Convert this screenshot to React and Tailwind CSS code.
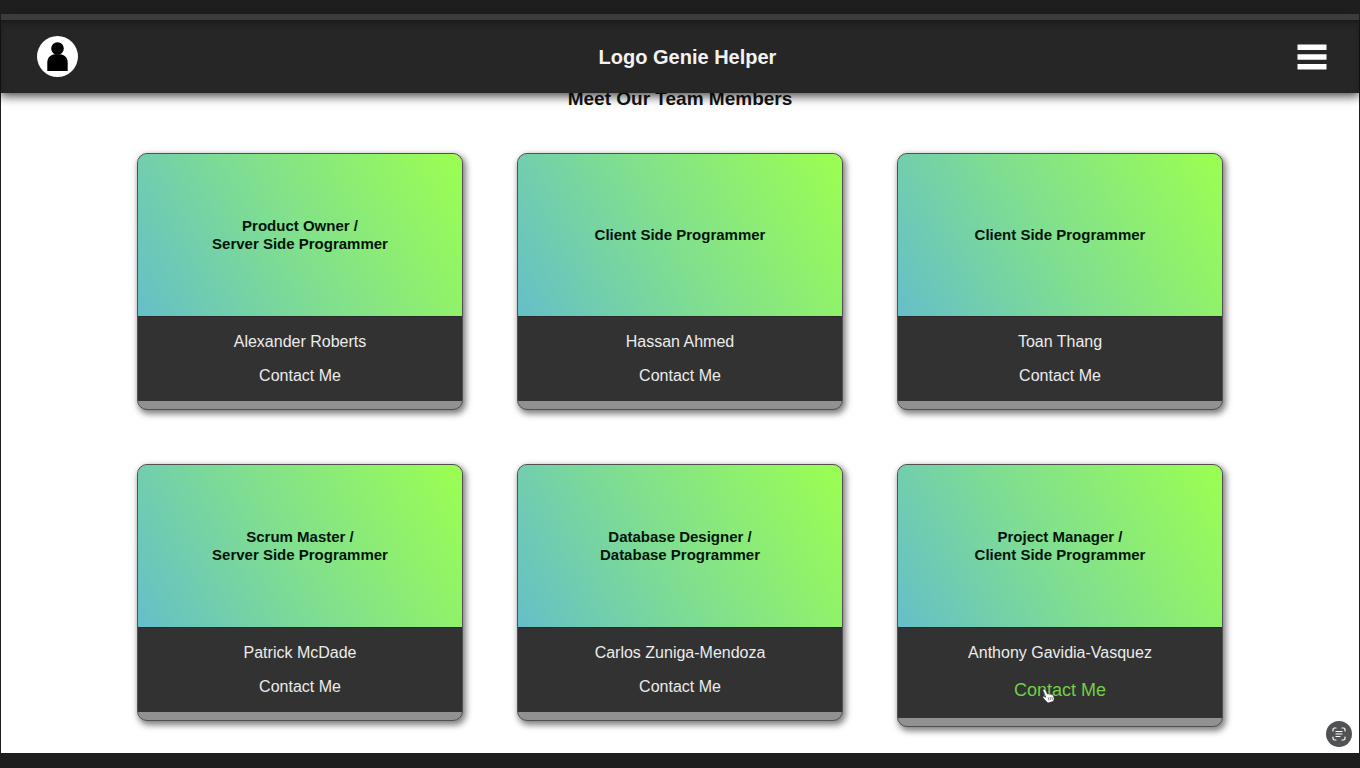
const members = [
  { role: ["Product Owner /", "Server Side Programmer"], name: "Alexander Roberts" },
  { role: ["Client Side Programmer"], name: "Hassan Ahmed" },
  { role: ["Client Side Programmer"], name: "Toan Thang" },
  { role: ["Scrum Master /", "Server Side Programmer"], name: "Patrick McDade" },
  { role: ["Database Designer /", "Database Programmer"], name: "Carlos Zuniga-Mendoza" },
  { role: ["Project Manager /", "Client Side Programmer"], name: "Anthony Gavidia-Vasquez", active: true },
];

function HandCursor() {
  return (
    <svg
      className="pointer-events-none absolute left-7 top-2.5 h-[17px] w-3.5"
      viewBox="0 0 16 19"
      aria-hidden="true"
    >
      <path
        d="M1.6 1.2C2.6.7 3.6 1.2 4.1 2.2L6.3 6.6C7.2 6 8.2 6.2 8.7 7C9.6 6.4 10.6 6.7 11 7.6C12.2 7.2 13 7.8 13.3 8.9L14 12L13.2 15L6.8 17L3.2 13.4L1 10.7C.6 9.8 1.6 9 2.6 9.5L4.3 10.3L1.3 3.3C.9 2.4 1 1.6 1.6 1.2Z"
        fill="#fff"
        stroke="#333"
        strokeWidth="0.8"
        strokeLinejoin="round"
      />
      <path d="M7 10.5L8 14M9.2 10.2L10 13.5M11.3 10L12 13" stroke="#666" strokeWidth="0.9" fill="none" />
    </svg>
  );
}

function MemberCard({ role, name, active }) {
  return (
    <article className="overflow-hidden rounded-[10px] border border-[#505050] bg-[#919191] shadow-[2px_3px_6px_1px_rgba(0,0,0,0.5)]">
      <div className="flex h-[162px] flex-col items-center justify-center bg-[linear-gradient(60deg,#65bfc8,#82e18b_50%,#9cff50)] text-center text-[15px] leading-[18px] font-bold text-[#03140a]">
        {role.map((line) => (
          <div key={line}>{line}</div>
        ))}
      </div>
      <div className="mb-2 flex flex-col items-center gap-4 border-t border-[#2a2a2a] bg-[#323232] pt-4 pb-4 text-base leading-[18px] text-[#ececec]">
        <p>{name}</p>
        {active ? (
          <a href="#contact" className="relative text-lg leading-6 text-[#6fd043]">
            Contact Me
            <HandCursor />
          </a>
        ) : (
          <a href="#contact" className="hover:text-[#6fd043]">Contact Me</a>
        )}
      </div>
    </article>
  );
}

export default function App() {
  return (
    <div className="flex min-h-screen flex-col bg-[#1e1e1e] font-['Liberation_Sans',Arial,sans-serif]">
      <div className="relative z-20 mx-px mt-3.5 h-1.5 bg-[#3c3c3c]" />
      <header className="relative z-10 mx-px flex h-[73px] items-center justify-between bg-[#262626] pr-8 pl-9 shadow-[0_2px_10px_1px_rgba(0,0,0,0.75),inset_0_5px_6px_-2px_rgba(0,0,0,0.35)]">
        <button type="button" aria-label="Profile">
          <svg className="size-[41px]" viewBox="0 0 41 41" aria-hidden="true">
            <circle cx="20.5" cy="20.5" r="20.5" fill="#fff" />
            <circle cx="20.5" cy="12.5" r="6.3" fill="#000" />
            <path d="M10.3 35V26.5C10.3 21.8 13.6 18.5 18 18.3H23C27.4 18.5 30.7 21.8 30.7 26.5V35Z" fill="#000" />
          </svg>
        </button>
        <h1 className="text-xl font-bold text-[#f2f2f2]">Logo Genie Helper</h1>
        <button type="button" aria-label="Open menu">
          <svg className="h-[26px] w-[30px]" viewBox="0 0 30 26" aria-hidden="true">
            <path d="M0.5 0.5H29.5V6H0.5ZM0.5 10.2H29.5V15.7H0.5ZM0.5 20H29.5V25.5H0.5Z" fill="#fff" />
          </svg>
        </button>
      </header>

      <main className="mx-px flex-1 bg-white px-[10%] pb-6">
        <h2 className="-mt-1 text-center text-[19px] leading-5 font-bold text-[#141414]">Meet Our Team Members</h2>
        <div className="mt-11 grid grid-cols-3 items-start gap-[54px]">
          {members.map((member) => (
            <MemberCard key={member.name} {...member} />
          ))}
        </div>
      </main>
      <div className="h-[15px]" />

      <button
        type="button"
        aria-label="Scan text"
        className="fixed right-2 bottom-[21px] z-20 flex size-[26px] items-center justify-center rounded-full bg-[#505254]"
      >
        <svg className="size-3.5" viewBox="0 0 14 14" fill="none" stroke="#fff" strokeWidth="1.2" strokeLinecap="round" aria-hidden="true">
          <path d="M1 4V2.5Q1 1 2.5 1H4M10 1H11.5Q13 1 13 2.5V4M13 10V11.5Q13 13 11.5 13H10M4 13H2.5Q1 13 1 11.5V10M4 4.5H10M4 7H10M4 9.5H8" />
        </svg>
      </button>
    </div>
  );
}
